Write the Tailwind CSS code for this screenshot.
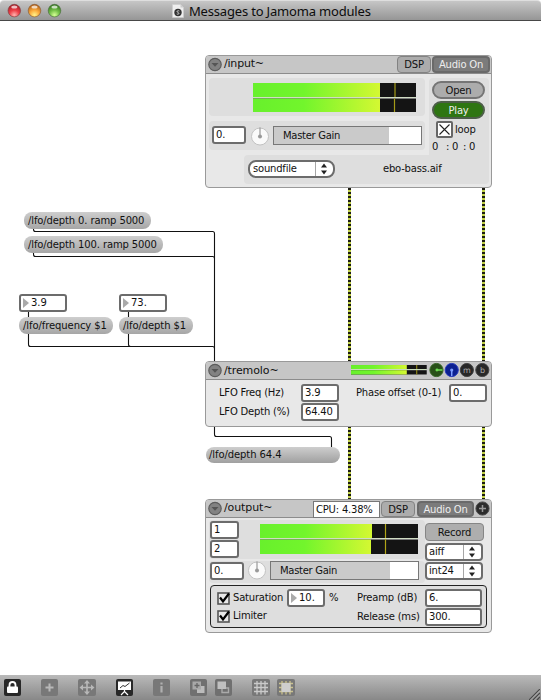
<!DOCTYPE html>
<html lang="en">
<head>
<meta charset="utf-8">
<title>Messages to Jamoma modules</title>
<script src="https://cdn.jsdelivr.net/npm/@tailwindcss/browser@4"></script>
</head>
<body class="bg-white">
<div class="flex h-[700px] w-[541px] flex-col overflow-hidden bg-white font-['DejaVu_Sans',sans-serif] text-[10px] leading-[14px] tracking-[-0.2px] whitespace-nowrap text-[#111]">

  <!-- Title bar -->
  <header class="flex h-[21px] shrink-0 items-center rounded-t-[4px] border-t border-b border-t-[#dedede] border-b-[#484848] bg-linear-to-b from-[#c6c6c6] to-[#969696] pl-[7px]">
    <svg class="h-[15px] w-[56px] shrink-0" viewBox="0 0 56 15">
      <defs>
        <radialGradient id="r" cx=".5" cy=".85" r=".85"><stop offset="0" stop-color="#ffb4b0"/><stop offset=".45" stop-color="#ee4048"/><stop offset="1" stop-color="#a01822"/></radialGradient>
        <radialGradient id="y" cx=".5" cy=".85" r=".85"><stop offset="0" stop-color="#fff38a"/><stop offset=".45" stop-color="#fbab3c"/><stop offset="1" stop-color="#a85614"/></radialGradient>
        <radialGradient id="g" cx=".5" cy=".85" r=".85"><stop offset="0" stop-color="#d6ff96"/><stop offset=".45" stop-color="#76c24a"/><stop offset="1" stop-color="#2c6e18"/></radialGradient>
      </defs>
      <circle cx="7.3" cy="7.6" r="6.3" fill="url(#r)" stroke="#7b3a3c" stroke-width=".6"/><ellipse cx="7.3" cy="4" rx="3" ry="1.6" fill="#fff" opacity=".7"/>
      <circle cx="27.5" cy="7.6" r="6.3" fill="url(#y)" stroke="#84582e" stroke-width=".6"/><ellipse cx="27.5" cy="4" rx="3" ry="1.6" fill="#fff" opacity=".7"/>
      <circle cx="47.5" cy="7.6" r="6.3" fill="url(#g)" stroke="#45683a" stroke-width=".6"/><ellipse cx="47.5" cy="4" rx="3" ry="1.6" fill="#fff" opacity=".7"/>
    </svg>
    <svg class="ml-[109px] h-[14px] w-[12px] shrink-0" viewBox="0 0 12 14"><path d="M.5.5h8l3 3v10H.5z" fill="#eee" stroke="#ccc" stroke-width=".6"/><path d="M8.5.5v3h3" fill="#ccc"/><circle cx="6" cy="8.500" r="3.700" fill="#333"/><path d="M7.300 7c-2.400-1-3 1-1.300 1.500S7 10.800 4.800 10" fill="none" stroke="#ddd" stroke-width=".9"/></svg>
    <h1 class="ml-[5px] font-['Noto_Sans',sans-serif] text-[13px] leading-[18px] tracking-[-0.18px] text-[#0c0c0c]">Messages to Jamoma modules</h1>
  </header>

  <!-- Patcher canvas: coordinates of objects are relative to the area below the title bar -->
  <main class="relative min-h-0 flex-1">
    <svg class="absolute top-0 left-0 h-[654px] w-[541px]" viewBox="0 21 541 654" fill="none">
      <g stroke="#1c1c10" stroke-width="3"><path d="M349.500 188v173M349.500 427v72M483.500 188v173M483.500 427v72"/></g>
      <g stroke="#c0d048" stroke-width="3" stroke-dasharray="2 2"><path d="M349.500 190v171M349.500 428v71M483.500 190v171M483.500 428v71"/></g>
      <g stroke="#111" stroke-width="1.100">
        <path d="M33.500 228v1.500q0 2 2 2H212.500q2 0 2 2V361"/>
        <path d="M33.500 252v2.500q0 2 2 2H212.500q2 0 2 2"/>
        <path d="M28.500 311v33.500q0 2 2 2H212.500q2 0 2 2"/>
        <path d="M128.500 311v33.500q0 2 2 2"/>
        <path d="M214.500 427v7.500q0 2 2 2H329.500q2 0 2 2V447"/>
      </g>
    </svg>

    <!-- Messages -->
    <div class="absolute top-[191px] left-[24px] flex h-[17px] w-[127px] items-center rounded-[8px] bg-linear-to-b from-[#cecece] to-[#a6a6a6] pl-[4px] tracking-[-0.12px]">/lfo/depth 0. ramp 5000</div>
    <div class="absolute top-[215px] left-[24px] flex h-[17px] w-[139px] items-center rounded-[8px] bg-linear-to-b from-[#cecece] to-[#a6a6a6] pl-[4px] tracking-[-0.12px]">/lfo/depth 100. ramp 5000</div>
    <div class="absolute top-[296px] left-[19px] flex h-[17px] w-[94px] items-center rounded-[8px] bg-linear-to-b from-[#cecece] to-[#a6a6a6] pl-[4px] tracking-[-0.08px]">/lfo/frequency $1</div>
    <div class="absolute top-[296px] left-[119px] flex h-[17px] w-[74px] items-center rounded-[8px] bg-linear-to-b from-[#cecece] to-[#a6a6a6] pl-[4px] tracking-[-0.08px]">/lfo/depth $1</div>
    <div class="absolute top-[426px] left-[206px] flex h-[16px] w-[134px] items-center rounded-[8px] bg-linear-to-b from-[#cecece] to-[#a0a0a0] pl-[3px] tracking-[-0.08px]">/lfo/depth 64.4</div>

    <!-- Number boxes -->
    <div class="absolute top-[273px] left-[19px] flex h-[18px] w-[48px] items-center gap-[2px] rounded-[3px] border-2 border-[#6c6c6c] bg-white pl-[2px] tracking-normal"><svg class="h-[10px] w-[6px]" viewBox="0 0 6 10"><path d="M0 0l6 5-6 5z" fill="#aaa"/></svg>3.9</div>
    <div class="absolute top-[273px] left-[119px] flex h-[18px] w-[48px] items-center gap-[2px] rounded-[3px] border-2 border-[#6c6c6c] bg-white pl-[2px] tracking-normal"><svg class="h-[10px] w-[6px]" viewBox="0 0 6 10"><path d="M0 0l6 5-6 5z" fill="#aaa"/></svg>73.</div>

    <!-- /input~ -->
    <section class="absolute top-[34px] left-[205px] flex h-[133px] w-[287px] flex-col overflow-hidden rounded-[4px] border border-[#999] bg-[#e8e8e8]">
      <div class="flex h-[18px] shrink-0 items-start border-b border-[#8c8c8c] bg-[#c6c6c6] pl-[2px]">
        <svg class="mt-[1px] h-[15px] w-[14px]" viewBox="0 0 14 15"><circle cx="7" cy="7.500" r="6.200" fill="#828282" stroke="#5c5c5c" stroke-width="1.200"/><path d="M3.500 6h7L7 9.800z" fill="#555"/></svg>
        <span class="ml-[2px] w-[173px] text-[11px] leading-[16px] tracking-[-0.2px]">/input~</span>
        <span class="h-[17px] w-[34px] rounded-[4px] border-[1.500px] border-[#828282] bg-[#acacac] text-center leading-[16px]">DSP</span>
        <span class="ml-[1px] h-[17px] w-[58px] rounded-[4px] border-2 border-[#6a6a6a] bg-[#7b7b7b] text-center leading-[14px] text-[#eee]">Audio On</span>
      </div>
      <div class="flex pt-[4px] pl-[3px]">
        <div class="w-[220px]">
          <div class="h-[38px] w-[216px] rounded-[4px] bg-[#dedede] pt-[5px] pl-[44px]">
            <svg class="h-[29px] w-[163px]" viewBox="0 0 163 29">
              <defs><linearGradient id="m" x1="0" x2="1"><stop offset="0" stop-color="#68f02c"/><stop offset=".4" stop-color="#72f52c"/><stop offset="1" stop-color="#d4f832"/></linearGradient></defs>
              <rect width="163" height="14.500" fill="#141414"/><rect y="15.500" width="163" height="13.500" fill="#141414"/>
              <rect width="127" height="14.500" fill="url(#m)"/><rect y="15.500" width="127" height="13.500" fill="url(#m)"/>
              <path d="M142 0v14.500M141.500 15.500v13.500" stroke="#a49a18" stroke-width="1.200"/><path d="M0 14.500h163" stroke="#d0dcc4"/>
            </svg>
          </div>
          <div class="mt-[5px] flex h-[29px] w-[216px] items-start rounded-[4px] bg-[#dedede] pl-[3px]">
            <span class="mt-[5px] h-[18px] w-[34px] rounded-[3px] border-2 border-[#6c6c6c] bg-white pl-[2px] tracking-normal">0.</span>
            <svg class="mt-[5px] ml-[4px] h-[20px] w-[20px]" viewBox="0 0 20 20"><circle cx="10" cy="10.500" r="8.500" fill="#fafafa" stroke="#c2c2c2"/><path d="M10 1.500v9" stroke="#999" stroke-width="1.200"/><circle cx="10" cy="10.500" r="2" fill="#999"/></svg>
            <div class="mt-[5px] ml-[3px] flex h-[19px] w-[149px] items-center border-[1.500px] border-[#777] bg-linear-to-r from-[#cacaca] from-[78%] to-white to-[78%] pt-px pl-[9px] tracking-[-0.3px]">Master Gain</div>
          </div>
        </div>
        <div class="flex h-[77px] w-[60px] flex-col rounded-t-[4px] bg-[#dedede] pt-[3px] pl-[3px]">
          <span class="h-[18px] w-[53px] rounded-full border-2 border-[#757575] bg-[#acacac] text-center leading-[15px]">Open</span>
          <span class="mt-[2px] h-[18px] w-[53px] rounded-full border-2 border-[#4e5e4a] bg-[#2e7512] text-center leading-[15px] text-[#eee]">Play</span>
          <div class="mt-[2px] flex h-[17px] items-center gap-[2px] pl-[4px]"><svg class="h-[17px] w-[17px]" viewBox="0 0 17 17"><rect x="1" y="1" width="15" height="15" rx="1" fill="#fff" stroke="#666" stroke-width="2"/><path d="M3.500 3.500l10 10M13.500 3.500l-10 10" stroke="#222" stroke-width="1.100"/></svg>loop</div>
          <div class="mt-[1px] grid grid-cols-[14px_6px_11px_6px_7px] pt-px"><span>0</span><span>:</span><span>0</span><span>:</span><span>0</span></div>
        </div>
      </div>
      <div class="ml-[38px] flex h-[29px] w-[245px] rounded-[4px] rounded-tr-none bg-[#dedede] pt-[5px] pl-[4px]">
        <div class="flex h-[18px] w-[87px] justify-between rounded-[8px] border-2 border-[#6c6c6c] bg-white pl-[3px]">soundfile<svg class="h-[14px] w-[18px]" viewBox="0 0 18 14"><path d="M0 0v14" stroke="#888" stroke-width="1.500"/><path d="M6 5.500l3-4 3 4zM6 8.500l3 4 3-4z" fill="#222"/></svg></div>
        <span class="ml-[48px] leading-[17px]">ebo-bass.aif</span>
      </div>
    </section>

    <!-- /tremolo~ -->
    <section class="absolute top-[340px] left-[205px] flex h-[66px] w-[287px] flex-col overflow-hidden rounded-[4px] border border-[#999] bg-[#e8e8e8]">
      <div class="flex h-[18px] shrink-0 items-start border-b border-[#8c8c8c] bg-[#c6c6c6] pl-[2px]">
        <svg class="mt-[1px] h-[15px] w-[14px]" viewBox="0 0 14 15"><circle cx="7" cy="7.500" r="6.200" fill="#828282" stroke="#5c5c5c" stroke-width="1.200"/><path d="M3.500 6h7L7 9.800z" fill="#555"/></svg>
        <span class="ml-[2px] w-[127px] text-[11px] leading-[17px] tracking-[-0.1px]">/tremolo~</span>
        <svg class="mt-[3px] h-[10px] w-[77px]" viewBox="0 0 77 10"><rect width="76" height="4.300" fill="#141414"/><rect y="5.200" width="76" height="4.300" fill="#141414"/><rect width="56" height="4.300" fill="url(#m)"/><rect y="5.200" width="56" height="4.300" fill="url(#m)"/><path d="M66 0v9.500" stroke="#a49a18"/><path d="M0 4.500h76" stroke="#c8dcb8"/></svg>
        <svg class="ml-[2px] h-[16px] w-[62px]" viewBox="0 0 62 16"><circle cx="7.500" cy="8" r="6.600" fill="#285018" stroke="#346424"/><path d="M7.500 8h6" stroke="#6cdc50" stroke-width="1.500"/><circle cx="8" cy="8" r="1.500" fill="#6cdc50"/><circle cx="22.800" cy="8" r="6.600" fill="#0c2090" stroke="#2438bc"/><path d="M22.800 8v6" stroke="#7c9cff" stroke-width="1.500"/><circle cx="22.800" cy="8" r="1.600" fill="#7c9cff"/><circle cx="38" cy="8" r="6.600" fill="#282828" stroke="#424242"/><circle cx="53.500" cy="8" r="6.600" fill="#282828" stroke="#424242"/><g fill="#aaa" font-size="8" text-anchor="middle"><text x="38" y="11">m</text><text x="53.500" y="11">b</text></g></svg>
      </div>
      <div class="grid grid-cols-[82px_55px_93px_39px] items-start gap-y-[1px] pt-[4px] pl-[13px]">
        <span class="leading-[18px]">LFO Freq (Hz)</span><span class="h-[18px] w-[38px] rounded-[3px] border-2 border-[#6c6c6c] bg-white pl-[2px]">3.9</span><span class="leading-[18px]">Phase offset (0-1)</span><span class="h-[18px] w-[38px] rounded-[3px] border-2 border-[#6c6c6c] bg-white pl-[2px]">0.</span>
        <span class="leading-[18px]">LFO Depth (%)</span><span class="h-[18px] w-[38px] rounded-[3px] border-2 border-[#6c6c6c] bg-white pl-[2px]">64.40</span>
      </div>
    </section>

    <!-- /output~ -->
    <section class="absolute top-[478px] left-[205px] flex h-[134px] w-[287px] flex-col overflow-hidden rounded-[4px] border border-[#999] bg-[#e8e8e8]">
      <div class="flex h-[18px] shrink-0 items-start border-b border-[#8c8c8c] bg-[#c6c6c6] pl-[2px]">
        <svg class="mt-[1px] h-[15px] w-[14px]" viewBox="0 0 14 15"><circle cx="7" cy="7.500" r="6.200" fill="#828282" stroke="#5c5c5c" stroke-width="1.200"/><path d="M3.500 6h7L7 9.800z" fill="#555"/></svg>
        <span class="ml-[2px] w-[89px] text-[11px] leading-[16px] tracking-[-0.1px]">/output~</span>
        <span class="mt-[1px] h-[17px] w-[67px] border border-[#777] bg-white pl-[2px] leading-[15px]">CPU: 4.38%</span>
        <span class="ml-[1px] h-[16px] w-[34px] rounded-[4px] border-[1.500px] border-[#828282] bg-[#acacac] mt-[1px] text-center leading-[15px]">DSP</span>
        <span class="ml-[2px] h-[16px] w-[57px] rounded-[4px] border-2 border-[#6a6a6a] bg-[#7b7b7b] mt-[1px] text-center leading-[13px] text-[#eee]">Audio On</span>
        <svg class="mt-[1px] ml-[1px] h-[15px] w-[15px]" viewBox="0 0 15 15"><circle cx="7.500" cy="7.500" r="6.600" fill="#2c2c2c" stroke="#4c4c4c"/><path d="M7.500 4v7M4 7.500h7" stroke="#999" stroke-width="1.500"/></svg>
      </div>
      <div class="flex h-[67px] shrink-0 pt-[2px] pl-[3px]">
        <div class="w-[216px]">
          <div class="flex h-[39px] rounded-[4px] bg-[#dedede]">
            <div class="flex w-[51px] flex-col gap-[1px] pt-px pl-px"><span class="h-[18px] w-[29px] rounded-[3px] border-2 border-[#6c6c6c] bg-white pl-[2px]">1</span><span class="h-[18px] w-[29px] rounded-[3px] border-2 border-[#6c6c6c] bg-white pl-[2px]">2</span></div>
            <svg class="mt-[4px] h-[31px] w-[158px]" viewBox="0 0 158 31"><rect width="158" height="14.500" fill="#141414"/><rect y="15.500" width="158" height="14.500" fill="#141414"/><rect width="112" height="14.500" fill="url(#m)"/><rect y="15.500" width="111" height="14.500" fill="url(#m)"/><path d="M125.500 0v30" stroke="#b0a418" stroke-width="1.200"/><path d="M0 14.500h158" stroke="#d0dcc4"/></svg>
          </div>
          <div class="mt-[2px] flex h-[22px] rounded-[4px] bg-[#dedede] pl-px">
            <span class="mt-px h-[18px] w-[34px] rounded-[3px] border-2 border-[#6c6c6c] bg-white pl-[2px] tracking-normal">0.</span>
            <svg class="-mt-px ml-[3px] h-[20px] w-[20px]" viewBox="0 0 20 20"><circle cx="10" cy="10.500" r="8.500" fill="#fafafa" stroke="#c2c2c2"/><path d="M10 1.500v9" stroke="#999" stroke-width="1.200"/><circle cx="10" cy="10.500" r="2" fill="#999"/></svg>
            <div class="ml-[3px] flex h-[19px] w-[149px] items-center border-[1.500px] border-[#777] bg-linear-to-r from-[#cacaca] from-[81%] to-white to-[81%] pl-[9px] tracking-[-0.3px]">Master Gain</div>
          </div>
        </div>
        <div class="flex flex-col gap-[1px] pt-[3px]">
          <span class="h-[18px] w-[59px] rounded-[4px] border-[1.500px] border-[#868686] bg-[#aeaeae] text-center leading-[17px]">Record</span>
          <div class="mt-[1px] flex h-[18px] w-[58px] justify-between rounded-[4px] border-2 border-[#6c6c6c] bg-white pl-[2px]">aiff<svg class="h-[14px] w-[18px]" viewBox="0 0 18 14"><path d="M0 0v14" stroke="#888" stroke-width="1.500"/><path d="M6 5.500l3-4 3 4zM6 8.500l3 4 3-4z" fill="#222"/></svg></div>
          <div class="flex h-[18px] w-[58px] justify-between rounded-[4px] border-2 border-[#6c6c6c] bg-white pl-[2px]">int24<svg class="h-[14px] w-[18px]" viewBox="0 0 18 14"><path d="M0 0v14" stroke="#888" stroke-width="1.500"/><path d="M6 5.500l3-4 3 4zM6 8.500l3 4 3-4z" fill="#222"/></svg></div>
        </div>
      </div>
      <div class="ml-[4px] flex h-[43px] w-[277px] rounded-[4px] border-[1.500px] border-[#222] bg-[#dedede] pt-[3px] pl-[6px]">
        <div class="flex w-[140px] flex-col gap-[1px]">
          <div class="flex h-[18px] items-center"><svg class="h-[13px] w-[13px]" viewBox="0 0 13 13"><rect x="1" y="1" width="11" height="11" fill="#e8e8e8" stroke="#555" stroke-width="1.600"/><path d="M3 5.500l3 4L12 1.500" fill="none" stroke="#000" stroke-width="2.200"/></svg><span class="ml-[3px] w-[54px]">Saturation</span><span class="flex h-[18px] w-[38px] items-center gap-[2px] rounded-[3px] border-2 border-[#6c6c6c] bg-white pl-[2px] tracking-normal"><svg class="h-[10px] w-[6px]" viewBox="0 0 6 10"><path d="M0 0l6 5-6 5z" fill="#aaa"/></svg>10.</span><span class="ml-[4px]">%</span></div>
          <div class="flex h-[16px] items-center gap-[3px]"><svg class="h-[13px] w-[13px]" viewBox="0 0 13 13"><rect x="1" y="1" width="11" height="11" fill="#e8e8e8" stroke="#555" stroke-width="1.600"/><path d="M3 5.500l3 4L12 1.500" fill="none" stroke="#000" stroke-width="2.200"/></svg>Limiter</div>
        </div>
        <div class="grid grid-cols-[68px_57px] content-start gap-y-[1px]">
          <span class="leading-[18px]">Preamp (dB)</span><span class="h-[18px] w-[57px] rounded-[3px] border-2 border-[#6c6c6c] bg-white pl-[2px]">6.</span>
          <span class="leading-[18px]">Release (ms)</span><span class="h-[18px] w-[57px] rounded-[3px] border-2 border-[#6c6c6c] bg-white pl-[2px]">300.</span>
        </div>
      </div>
    </section>
  </main>

  <!-- Toolbar -->
  <footer class="flex h-[25px] shrink-0 items-center bg-linear-to-b from-[#bababa] to-[#888] pl-[4px]">
    <svg class="h-[17px] w-[17px]" viewBox="0 0 17 17"><rect width="17" height="17" rx="2" fill="#282828"/><rect x="3" y="7.500" width="11" height="6.500" rx="1" fill="#fff"/><path d="M5.500 8V6a3 3 0 0 1 6 0v2" fill="none" stroke="#fff" stroke-width="1.800"/></svg>
    <svg class="ml-[20px] h-[17px] w-[17px]" viewBox="0 0 17 17"><rect width="17" height="17" rx="2" fill="#787878"/><path d="M8.500 4.500v8M4.500 8.500h8" stroke="#b8b8b8" stroke-width="2"/></svg>
    <svg class="ml-[20px] h-[17px] w-[18px]" viewBox="0 0 18 17"><rect width="18" height="17" rx="2" fill="#787878"/><path d="M9 3v11M3.500 8.500h11" stroke="#b8b8b8" stroke-width="1.600"/><path d="M9 1l3 3.500H6zM9 16l3-3.500H6zM1.500 8.500L5 5.500v6zM16.500 8.500L13 5.500v6z" fill="#b8b8b8"/></svg>
    <svg class="ml-[20px] h-[17px] w-[17px]" viewBox="0 0 17 17"><rect width="17" height="17" rx="2" fill="#282828"/><rect x="2" y="2.500" width="13" height="8.500" fill="#fff"/><path d="M4 9l3-2.500 2 1 4.500-3.500" fill="none" stroke="#333"/><path d="M8.500 11v1.500L5 16M8.500 12.500L12 16" fill="none" stroke="#fff" stroke-width="1.200"/></svg>
    <svg class="ml-[20px] h-[17px] w-[17px]" viewBox="0 0 17 17"><rect width="17" height="17" rx="2" fill="#787878"/><path d="M8.500 3.500v2M8.500 7v6.500" stroke="#b0b0b0" stroke-width="2.200"/></svg>
    <svg class="ml-[20px] h-[17px] w-[17px]" viewBox="0 0 17 17"><rect width="17" height="17" rx="2" fill="#707070"/><rect x="7" y="7" width="7.500" height="7" fill="#bcbcbc"/><rect x="2.500" y="2.500" width="8.500" height="8" fill="#a8a8a8"/><path d="M7 4v5M4.500 6.500h5" stroke="#666" stroke-width="1.300"/></svg>
    <svg class="ml-[8px] h-[17px] w-[17px]" viewBox="0 0 17 17"><rect width="17" height="17" rx="2" fill="#707070"/><path d="M7 9v4.500h6.500V9h-3" fill="none" stroke="#aaa" stroke-width="1.400"/><rect x="2.500" y="2.500" width="8.500" height="7.500" fill="#c0c0c0"/></svg>
    <svg class="ml-[20px] h-[17px] w-[18px]" viewBox="0 0 18 17"><rect width="18" height="17" rx="2" fill="#787878"/><path d="M5 2v13.500M9 2v13.500M13 2v13.500M2 4.500h14M2 8.500h14M2 12.500h14" stroke="#cacaca" stroke-width="1.300"/></svg>
    <svg class="ml-[7px] h-[17px] w-[18px]" viewBox="0 0 18 17"><rect width="18" height="17" rx="2" fill="#787878"/><path d="M5 2v13.500M9 2v13.500M13 2v13.500M2 4.500h14M2 8.500h14M2 12.500h14" stroke="#cbc28e" stroke-width="1.300"/><rect x="4.500" y="4" width="9" height="9" fill="#cecece"/></svg>
    <svg class="mr-px ml-auto h-[11px] w-[11px] self-end" viewBox="0 0 11 11"><path d="M0 11L11 0M4 11l7-7M8 11l3-3" stroke="#484848" stroke-width="1.200"/><path d="M1.500 11L11 1.500M5.500 11L11 5.500" stroke="#c8c8c8" stroke-width=".6"/></svg>
  </footer>
</div>
</body>
</html>
